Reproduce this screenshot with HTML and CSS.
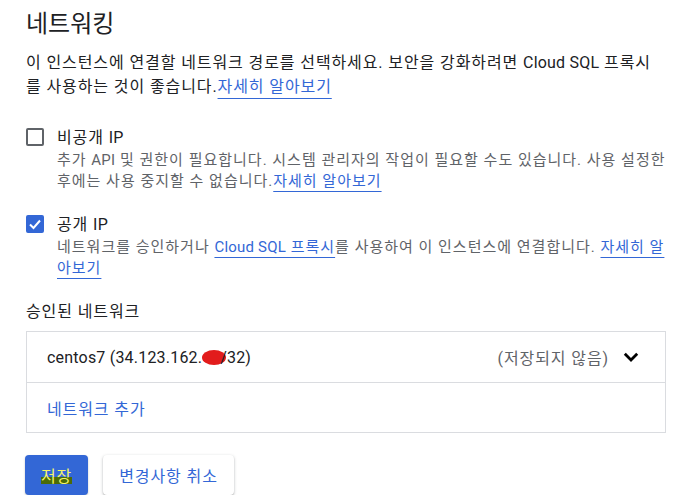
FILE: index.html
```html
<!DOCTYPE html>
<html lang="ko">
<head>
<meta charset="utf-8">
<link rel="stylesheet" href="styles.css">
</head>
<body>
<main class="page">
  <h1 class="title">네트워킹</h1>
  <p class="intro">이 인스턴스에 연결할 네트워크 경로를 선택하세요. 보안을 강화하려면 <span class="en">Cloud SQL</span> 프록시를 사용하는 것이 좋습니다.<a class="link" href="#">자세히 알아보기</a></p>

  <div class="option first">
    <span class="box"></span>
    <div class="option-body">
      <div class="option-label">비공개 <span class="en">IP</span></div>
      <div class="option-desc">추가 <span class="en">API</span> 및 권한이 필요합니다. 시스템 관리자의 작업이 필요할 수도 있습니다. 사용 설정한 후에는 사용 중지할 수 없습니다.<a class="link" href="#">자세히 알아보기</a></div>
    </div>
  </div>

  <div class="option second">
    <span class="box checked">
      <svg viewBox="0 0 18 18" width="18" height="18"><polyline points="4,9.5 7.5,13 14,5.5" fill="none" stroke="#fff" stroke-width="2"/></svg>
    </span>
    <div class="option-body">
      <div class="option-label">공개 <span class="en">IP</span></div>
      <div class="option-desc">네트워크를 승인하거나 <a class="link" href="#"><span class="en">Cloud SQL</span> 프록시</a>를 사용하여 이 인스턴스에 연결합니다. <a class="link" href="#">자세히 알아보기</a></div>
    </div>
  </div>

  <div class="section-label">승인된 네트워크</div>
  <div class="networks">
    <div class="net-row">
      <span class="net-name en">centos7 (34.123.162.<span class="redact"></span>/32)</span>
      <span class="net-status">(저장되지 않음)</span>
      <svg class="chev" viewBox="0 0 16 10" width="16" height="10"><polyline points="1.8,1.8 8,8 14.2,1.8" fill="none" stroke="#000" stroke-width="2.8"/></svg>
    </div>
    <div class="net-row add">
      <a class="add-link" href="#">네트워크 추가</a>
    </div>
  </div>

  <div class="actions">
    <button class="btn primary"><span class="hl">저장</span></button>
    <button class="btn secondary">변경사항 취소</button>
  </div>
</main>
</body>
</html>
```

FILE: styles.css
```css
* { box-sizing: border-box; }
html, body { margin: 0; padding: 0; background: #fff; }
body {
  font-family: Roboto, "Noto Sans CJK KR", sans-serif;
  color: #202124;
  width: 683px;
}
.page { padding: 8px 17px 0 26px; letter-spacing: 0.9px; }
.en { letter-spacing: 0.2px; }
.title {
  margin: 0;
  font-size: 24px;
  font-weight: 400;
  line-height: 32px;
  letter-spacing: 0;
}
.intro {
  margin: 11px 0 0;
  font-size: 16px;
  line-height: 24px;
}
.link {
  color: #3367d6;
  text-decoration: underline;
  text-decoration-thickness: 1px;
  text-underline-offset: 6px;
}
.option { display: flex; gap: 13px; align-items: flex-start; }
.option.first { margin-top: 27px; }
.option.second { margin-top: 21px; }
.box {
  flex: none;
  width: 18px; height: 18px;
  margin-top: 2px;
  border: 2px solid #5f6368;
  border-radius: 2px;
  display: flex; align-items: center; justify-content: center;
}
.box.checked { background: #3367d6; border-color: #3367d6; }
.box.checked svg { flex: none; }
.option-body { flex: 1; }
.option-label { font-size: 16px; line-height: 24px; }
.option-desc { font-size: 15px; line-height: 21px; color: #5f6368; letter-spacing: 1px; }
.option-desc .en { letter-spacing: 0.2px; }
.option-desc .link { text-underline-offset: 5px; }
.section-label { margin-top: 21px; font-size: 16px; line-height: 24px; }
.networks {
  margin-top: 7px;
  border: 1px solid #dadce0;
}
.net-row {
  display: flex;
  align-items: center;
  height: 50px;
  padding: 0 26px 0 20px;
  font-size: 16px;
}
.net-row + .net-row { border-top: 1px solid #dadce0; height: 50px; }
.net-name { flex: 1; }
.redact {
  display: inline-block;
  width: 24px; height: 15px;
  background: #e21c1c;
  border-radius: 50%;
  vertical-align: -2px;
  margin-right: -6px;
}
.net-status { color: #5f6368; }
.chev { margin-left: 14px; flex: none; }
.add-link { color: #3367d6; text-decoration: none; }
.actions { display: flex; gap: 15px; margin-top: 22px; }
.btn {
  height: 40px;
  border: none;
  border-radius: 4px;
  font-family: inherit;
  font-size: 16px;
  letter-spacing: 0.9px;
  padding: 0 16px;
}
.btn.primary { background: #3367d6; color: #fff; margin-left: -1px; box-shadow: 0 1px 2px rgba(0,0,0,.25); }
.hl {
  color: #f4f46a;
  background: linear-gradient(to bottom, transparent 52%, #4b6b06 52%, #4b6b06 88%, transparent 88%);
}
.btn.secondary {
  background: #fff;
  color: #3367d6;
  box-shadow: 0 1px 3px rgba(60,64,67,.35), 0 1px 1px rgba(60,64,67,.15);
}
```
